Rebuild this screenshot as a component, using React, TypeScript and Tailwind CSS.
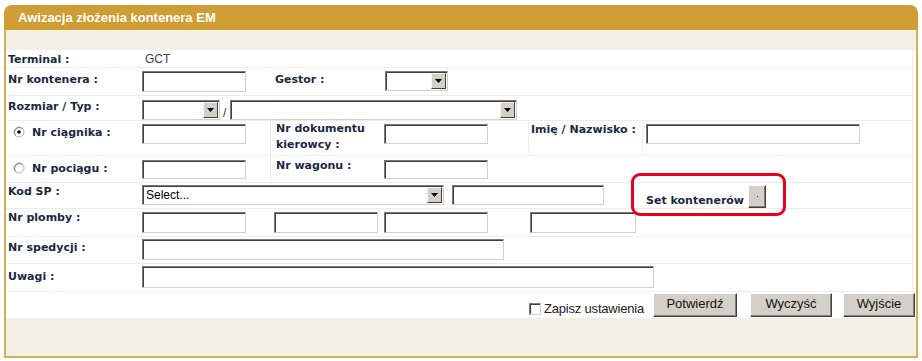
import React from "react";

const LBL =
    "font-['DejaVu_Sans',sans-serif] font-bold text-[11px] leading-[13px] text-[#1a2942] whitespace-nowrap";
const TXT = "font-['Liberation_Sans',Arial,sans-serif] text-[12px] leading-[13px]";
const FIELD =
    "block bg-white border border-t-[#7a7a7a] border-l-[#7a7a7a] border-r-[#d4d0c8] border-b-[#d4d0c8] shadow-[inset_1px_1px_0_#404040] outline-none";
const ROW = "grid grid-cols-[132px_132px_110px_148px_114px_1fr] border-b border-[#ececec]";

function Field({ className }: { className: string }) {
    return <input type="text" className={`${FIELD} ${className}`} />;
}

function Arrow() {
    return (
        <span className="flex w-[15px] shrink-0 items-center justify-center bg-[#d4d0c8] border border-t-[#f4f4f4] border-l-[#f4f4f4] border-r-[#404040] border-b-[#404040]">
            <svg width="7" height="4" viewBox="0 0 7 4">
                <path d="M0 0h7L3.5 4z" fill="#000" />
            </svg>
        </span>
    );
}

function Select({ className, text = "" }: { className: string; text?: string }) {
    return (
        <div className={`flex p-px ${FIELD} ${className}`}>
            <span className={`flex-1 pl-[2px] pt-[2px] text-black ${TXT}`}>{text}</span>
            <Arrow />
        </div>
    );
}

function Radio({ checked }: { checked?: boolean }) {
    return (
        <svg width="12" height="12" viewBox="0 0 12 12" className="shrink-0">
            <circle cx="6" cy="6" r="5" fill="#fff" stroke="#b5b5b5" />
            <path d="M2.5 9.5A5 5 0 0 1 9.5 2.5" fill="none" stroke="#808080" />
            {checked && <circle cx="6" cy="6" r="1.8" fill="#000" />}
        </svg>
    );
}

function Button({ label, className }: { label: string; className: string }) {
    return (
        <button
            className={`h-[24px] pb-[3px] bg-[#d4d0c8] border border-t-white border-l-white border-r-[#404040] border-b-[#404040] shadow-[inset_-1px_-1px_0_#808080] text-[13px] leading-[13px] text-[#111] font-['Liberation_Sans',Arial,sans-serif] ${className}`}
        >
            {label}
        </button>
    );
}

export default function App(): React.ReactElement {
    return (
        <div className="w-[922px] h-[361px] bg-white pl-[4px] pt-[5px]">
            <div className="w-[914px] h-[353px] flex flex-col">
                <div className="h-[25px] rounded-t-[8px] bg-[#cf9d33] flex items-center pl-[14px]">
                    <span className="font-['Liberation_Sans',Arial,sans-serif] font-bold text-[13px] text-white">
                        Awizacja złożenia kontenera EM
                    </span>
                </div>
                <div className="flex-1 flex flex-col border-2 border-t-0 border-[#d6ae55]">
                    <div className="h-[20px] bg-[#f2f0e4]" />

                    <div className="mr-[3px] border-r border-[#ececec]">
                        {/* Terminal */}
                        <div className={`${ROW} h-[18px]`}>
                            <div className={`${LBL} pl-[2px] pt-[3px]`}>Terminal :</div>
                            <div className={`${TXT} text-[#444] pl-[7px] pt-[3px]`}>GCT</div>
                        </div>

                        {/* Nr kontenera */}
                        <div className={`${ROW} h-[28px]`}>
                            <div className={`${LBL} pl-[2px] pt-[5px]`}>Nr kontenera :</div>
                            <div className="pl-[4px] pt-[3px]">
                                <Field className="w-[104px] h-[21px]" />
                            </div>
                            <div className={`${LBL} pl-[5px] pt-[5px]`}>Gestor :</div>
                            <div className="pl-[5px] pt-[3px]">
                                <Select className="w-[63px] h-[20px]" />
                            </div>
                        </div>

                        {/* Rozmiar / Typ */}
                        <div className={`${ROW} h-[25px]`}>
                            <div className={`${LBL} pl-[2px] pt-[4px]`}>Rozmiar / Typ :</div>
                            <div className="col-span-5 flex items-end pl-[4px] pt-[1px]">
                                <Select className="w-[78px] h-[20px]" />
                                <span className={`${TXT} text-[#333] w-[10px] pl-[3px]`}>/</span>
                                <Select className="w-[287px] h-[20px]" />
                            </div>
                        </div>

                        {/* Nr ciągnika */}
                        <div className={`${ROW} h-[35px]`}>
                            <div className="flex items-start gap-[7px] pl-[7px] pt-[4px]">
                                <span className="pt-[1px]">
                                    <Radio checked />
                                </span>
                                <span className={`${LBL} pt-[1px]`}>Nr ciągnika :</span>
                            </div>
                            <div className="pl-[4px] pt-[3px]">
                                <Field className="w-[104px] h-[20px]" />
                            </div>
                            <div className={`${LBL} leading-[16px] pl-[5px] pt-0 border-l border-[#efefef]`}>
                                Nr dokumentu
                                <br />
                                kierowcy :
                            </div>
                            <div className="pl-[4px] pt-[3px]">
                                <Field className="w-[104px] h-[20px]" />
                            </div>
                            <div className={`${LBL} pl-[2px] pt-[2px] border-l border-[#efefef]`}>Imię / Nazwisko :</div>
                            <div className="pl-[3px] pt-[3px] border-l border-[#efefef]">
                                <Field className="w-[214px] h-[20px]" />
                            </div>
                        </div>

                        {/* Nr pociągu */}
                        <div className={`${ROW} h-[27px]`}>
                            <div className="flex items-start gap-[7px] pl-[7px] pt-[5px]">
                                <span className="pt-[1px]">
                                    <Radio />
                                </span>
                                <span className={`${LBL} pt-[1px]`}>Nr pociągu :</span>
                            </div>
                            <div className="pl-[4px] pt-[4px]">
                                <Field className="w-[104px] h-[19px]" />
                            </div>
                            <div className={`${LBL} pl-[5px] pt-[3px] border-l border-[#efefef]`}>Nr wagonu :</div>
                            <div className="pl-[4px] pt-[4px]">
                                <Field className="w-[104px] h-[19px]" />
                            </div>
                        </div>

                        {/* Kod SP */}
                        <div className={`${ROW} h-[26px] relative`}>
                            <div className={`${LBL} pl-[2px] pt-[2px]`}>Kod SP :</div>
                            <div className="col-span-5 flex items-start pl-[4px] pt-[2px]">
                                <Select className="w-[302px] h-[20px]" text="Select..." />
                                <Field className="ml-[8px] w-[152px] h-[20px]" />
                                <span className={`${LBL} ml-[42px] mt-[9px]`}>Set kontenerów</span>
                                <button className="ml-[4px] w-[18px] h-[23px] bg-[#d4d0c8] border border-t-white border-l-white border-r-[#404040] border-b-[#404040] shadow-[inset_-1px_-1px_0_#808080] flex items-center justify-center">
                                    <span className="block w-[1px] h-[1px] bg-[#333]" />
                                </button>
                            </div>
                            <div className="absolute left-[625px] -top-[10px] w-[155px] h-[43px] rounded-[9px] border-[3px] border-[#e8001c] pointer-events-none" />
                        </div>

                        {/* Nr plomby */}
                        <div className={`${ROW} h-[28px]`}>
                            <div className={`${LBL} pl-[2px] pt-[2px]`}>Nr plomby :</div>
                            <div className="pl-[4px] pt-[3px]">
                                <Field className="w-[104px] h-[21px]" />
                            </div>
                            <div className="pl-[4px] pt-[3px]">
                                <Field className="w-[104px] h-[21px]" />
                            </div>
                            <div className="pl-[4px] pt-[3px]">
                                <Field className="w-[104px] h-[21px]" />
                            </div>
                            <div className="pl-[2px] pt-[3px]">
                                <Field className="w-[106px] h-[21px]" />
                            </div>
                        </div>

                        {/* Nr spedycji */}
                        <div className={`${ROW} h-[27px]`}>
                            <div className={`${LBL} pl-[2px] pt-[4px]`}>Nr spedycji :</div>
                            <div className="col-span-5 pl-[4px] pt-[2px]">
                                <Field className="w-[362px] h-[21px]" />
                            </div>
                        </div>

                        {/* Uwagi */}
                        <div className={`${ROW} h-[28px]`}>
                            <div className={`${LBL} pl-[2px] pt-[6px]`}>Uwagi :</div>
                            <div className="col-span-5 pl-[4px] pt-[2px]">
                                <Field className="w-[512px] h-[22px]" />
                            </div>
                        </div>
                    </div>

                    {/* buttons */}
                    <div className="h-[26px] flex justify-end items-start pt-[1px] pr-[1px]">
                        <div className="flex items-center gap-[3px] mt-[9px] mr-[9px]">
                            <span className="block w-[12px] h-[12px] bg-white border border-t-[#808080] border-l-[#808080] border-r-[#d4d0c8] border-b-[#d4d0c8] shadow-[inset_1px_1px_0_#404040]" />
                            <span className="font-['Liberation_Sans',Arial,sans-serif] text-[13px] tracking-[-0.2px] leading-[14px] text-[#222]">
                                Zapisz ustawienia
                            </span>
                        </div>
                        <Button label="Potwierdź" className="w-[84px]" />
                        <Button label="Wyczyść" className="ml-[13px] w-[82px]" />
                        <Button label="Wyjście" className="ml-[11px] w-[72px]" />
                    </div>

                    <div className="flex-1 bg-[#f2f0e4]" />
                </div>
            </div>
        </div>
    );
}
